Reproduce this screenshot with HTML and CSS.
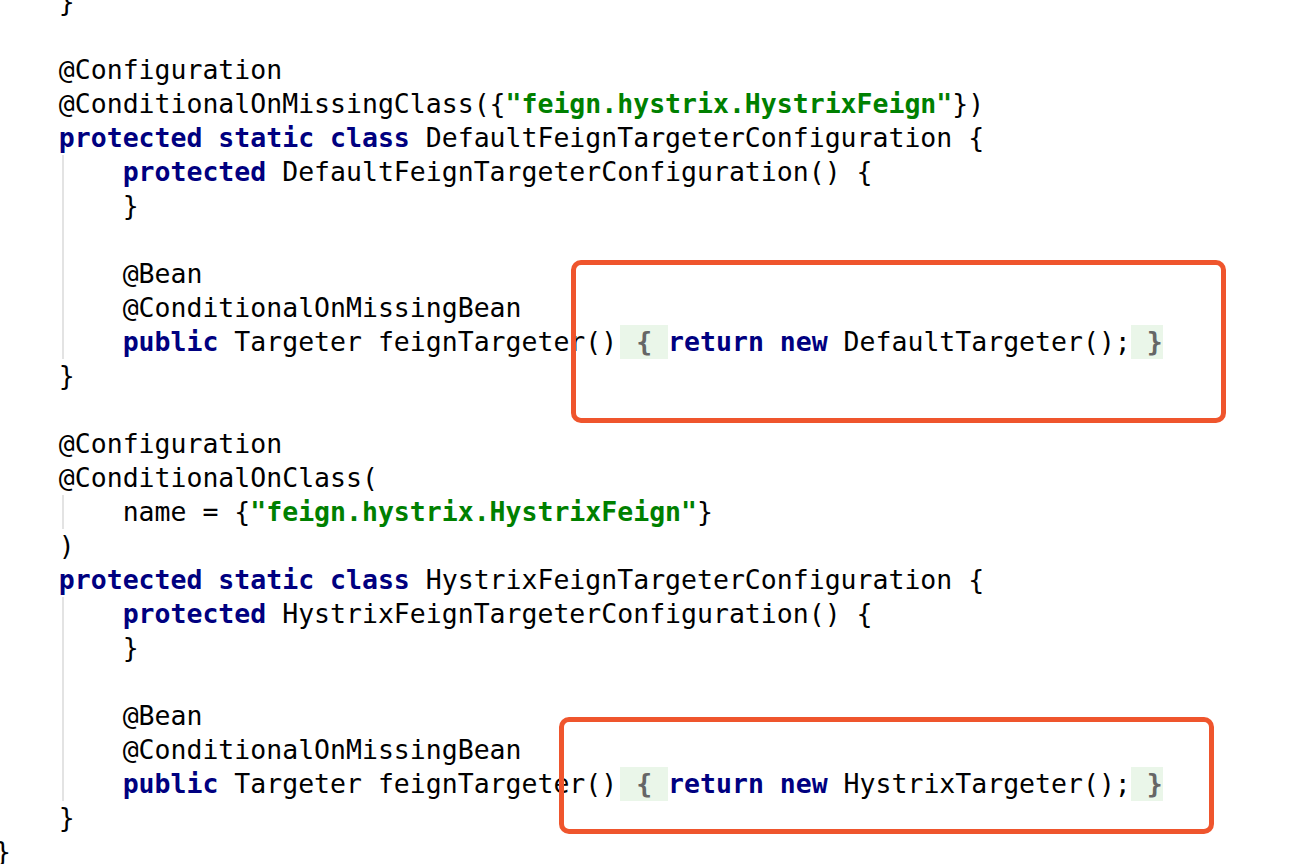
FILE: index.html
```html
<!DOCTYPE html>
<html lang="en">
<head>
  <meta charset="UTF-8" />
  <title>FeignClientsConfiguration</title>
  <link rel="stylesheet" href="styles.css">
</head>
<body>

  <div class="editor">
    <div class="code">
      <div class="line">    }</div>
      <div class="line"></div>
      <div class="line">    @Configuration</div>
      <div class="line">    @ConditionalOnMissingClass({<span class="str">"feign.hystrix.HystrixFeign"</span>})</div>
      <div class="line">    <span class="kw">protected static class</span> DefaultFeignTargeterConfiguration {</div>
      <div class="line g">        <span class="kw">protected</span> DefaultFeignTargeterConfiguration() {</div>
      <div class="line g">        }</div>
      <div class="line g"></div>
      <div class="line g">        @Bean</div>
      <div class="line g">        @ConditionalOnMissingBean</div>
      <div class="line g">        <span class="kw">public</span> Targeter feignTargeter()<span class="fold"> { </span><span class="kw">return new</span> DefaultTargeter();<span class="fold end"> }</span></div>
      <div class="line">    }</div>
      <div class="line"></div>
      <div class="line">    @Configuration</div>
      <div class="line">    @ConditionalOnClass(</div>
      <div class="line g">        name = {<span class="str">"feign.hystrix.HystrixFeign"</span>}</div>
      <div class="line">    )</div>
      <div class="line">    <span class="kw">protected static class</span> HystrixFeignTargeterConfiguration {</div>
      <div class="line g">        <span class="kw">protected</span> HystrixFeignTargeterConfiguration() {</div>
      <div class="line g">        }</div>
      <div class="line g"></div>
      <div class="line g">        @Bean</div>
      <div class="line g">        @ConditionalOnMissingBean</div>
      <div class="line g">        <span class="kw">public</span> Targeter feignTargeter()<span class="fold"> { </span><span class="kw">return new</span> HystrixTargeter();<span class="fold end"> }</span></div>
      <div class="line">    }</div>
      <div class="line">}</div>
    </div>

    <!-- annotation frames drawn over the code -->
    <div class="mark mark-default"></div>
    <div class="mark mark-hystrix"></div>
  </div>

</body>
</html>
```

FILE: styles.css
```css
* { box-sizing: border-box; margin:0; padding:0; }
html, body { height:100%; background:#fff; overflow:hidden; }

.editor { position:relative; display:flow-root; height:100%; }

.code {
  margin:-15px 0 0 -5px;
  font-family:'DejaVu Sans Mono', 'Liberation Mono', monospace;
  font-size:26.5px;
  line-height:34px;
  color:#000;
}
.line { height:34px; white-space:pre; }

/* indent guide for the nested block */
.line.g { background:linear-gradient(#e3e3e3, #e3e3e3) no-repeat 67px 0 / 2px 100%; }

.kw  { color:#000080; font-weight:bold; }
.str { color:#008000; font-weight:bold; }

/* collapsed one-line method body */
.fold {
  display:inline-block;
  height:34px;
  margin-left:3px;
  background:#eaf6e9;
  color:#666;
  font-weight:bold;
}
.fold.end { margin-left:0; }

/* —— red annotation frames —— */
.mark {
  position:absolute;
  border:5px solid #ef552d;
  border-radius:10px;
}
.mark-default { left:571px; top:260px; width:655px; height:163px; }
.mark-hystrix { left:559px; top:717px; width:655px; height:117px; }
```
